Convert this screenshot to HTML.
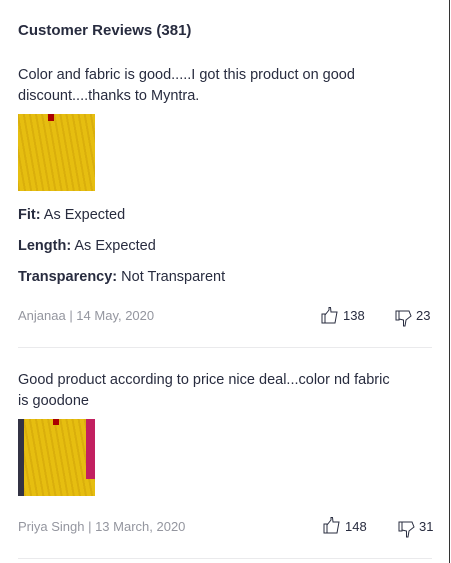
<!DOCTYPE html><html><head><style>
body{margin:0;width:451px;height:563px;background:#fff;font-family:"Liberation Sans",sans-serif;color:#282c3f;position:relative;overflow:hidden}
.a{position:absolute;white-space:nowrap}
.vb{position:absolute;right:1px;top:0;width:1px;height:563px;background:#333}
.hr{position:absolute;left:18px;width:414px;height:1px;background:#eaeaec}
.img{position:absolute;left:18px;width:77px;height:77px;background:#e6be10;background-image:repeating-linear-gradient(80deg,rgba(180,130,0,.25) 0 2px,transparent 2px 6px)}
.t{font-size:14.5px;line-height:21px}
.m{font-size:13px;color:#94969f}
.n{font-size:13px;color:#282c3f}
</style></head><body>
<div class="vb"></div>
<div class="a" style="left:18px;top:22px;font-size:15px;font-weight:bold">Customer Reviews (381)</div>
<div class="a t" style="left:18px;top:65px">Color and fabric is good.....I got this product on good<br>discount....thanks to Myntra.</div>
<div class="img" style="top:114px"><div style="position:absolute;left:30px;top:0;width:6px;height:7px;background:#a00"></div></div>
<div class="a t" style="left:18px;top:205px"><b>Fit:</b> As Expected</div>
<div class="a t" style="left:18px;top:236px"><b>Length:</b> As Expected</div>
<div class="a t" style="left:18px;top:267px"><b>Transparency:</b> Not Transparent</div>
<div class="a m" style="left:18px;top:308px">Anjanaa | 14 May, 2020</div>
<svg class="a" style="left:321px;top:307px" width="18" height="17" viewBox="0 0 18 17" fill="none" stroke="#282c3f" stroke-width="1"><path d="M1 7h3v9H1zM4 8l4-5V0.5h1.5L10 5h6l-2 11H4"/></svg>
<div class="a n" style="left:343px;top:308px">138</div>
<svg class="a" style="left:395px;top:310px" width="18" height="17" viewBox="0 0 18 17" fill="none" stroke="#282c3f" stroke-width="1"><path d="M1 1h3v9H1zM4 1h10l2 5-5 4-1 6H8.5V10L4 9"/></svg>
<div class="a n" style="left:416px;top:308px">23</div>
<div class="hr" style="top:347px"></div>
<div class="a t" style="left:18px;top:370px">Good product according to price nice deal...color nd fabric<br>is goodone</div>
<div class="img" style="top:419px"><div style="position:absolute;left:0;top:0;width:6px;height:77px;background:#334"></div><div style="position:absolute;right:0;top:0;width:9px;height:60px;background:#c22060"></div><div style="position:absolute;left:35px;top:0;width:6px;height:6px;background:#a00"></div></div>
<div class="a m" style="left:18px;top:519px">Priya Singh | 13 March, 2020</div>
<svg class="a" style="left:323px;top:517px" width="18" height="17" viewBox="0 0 18 17" fill="none" stroke="#282c3f" stroke-width="1"><path d="M1 7h3v9H1zM4 8l4-5V0.5h1.5L10 5h6l-2 11H4"/></svg>
<div class="a n" style="left:345px;top:519px">148</div>
<svg class="a" style="left:398px;top:521px" width="18" height="17" viewBox="0 0 18 17" fill="none" stroke="#282c3f" stroke-width="1"><path d="M1 1h3v9H1zM4 1h10l2 5-5 4-1 6H8.5V10L4 9"/></svg>
<div class="a n" style="left:419px;top:519px">31</div>
<div class="hr" style="top:558px"></div>
</body></html>
